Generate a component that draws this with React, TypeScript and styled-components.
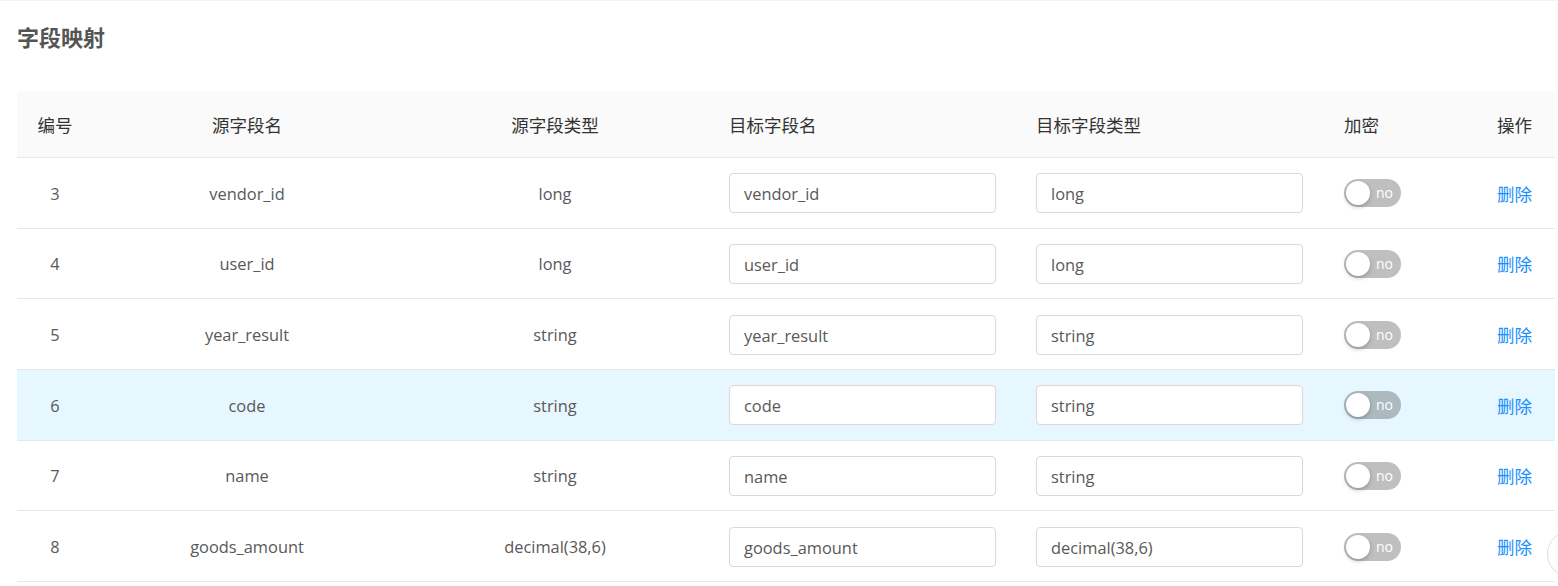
import React from "react";
import styled, { createGlobalStyle } from "styled-components";

const GlobalStyle = createGlobalStyle`
  html, body { margin: 0; padding: 0; background: #fff; }
  body {
    font-family: "Open Sans", "Noto Sans CJK SC", sans-serif;
    color: #555;
    overflow: hidden;
  }
  * { box-sizing: border-box; }
`;

const Page = styled.div`
  position: relative;
  width: 1558px;
  height: 586px;
  border-top: 1px solid #f3f3f3;
  padding: 0 3px 0 17px;
`;

const Title = styled.h2`
  margin: 19px 0 0;
  font-size: 22px;
  line-height: 32px;
  font-weight: 700;
  color: #555;
  font-family: "Noto Sans CJK SC", sans-serif;
`;

const COLS = "76px 308px 308px 307px 308px 153px 78px";

const Table = styled.div`
  margin-top: 39px;
  width: 1538px;
`;

const HeadRow = styled.div`
  display: grid;
  grid-template-columns: ${COLS};
  height: 67px;
  background: #fafafa;
  border-bottom: 1px solid #e8e8e8;
  border-radius: 4px 4px 0 0;
`;

const Row = styled.div<{ $active?: boolean }>`
  display: grid;
  grid-template-columns: ${COLS};
  height: 70.67px;
  background: ${(p) => (p.$active ? "#e6f7ff" : "#fff")};
  border-bottom: 1px solid #e8e8e8;
`;

const Cell = styled.div<{ $align?: "center" | "left" }>`
  display: flex;
  align-items: center;
  justify-content: ${(p) => (p.$align === "left" ? "flex-start" : "center")};
  padding: 1px 20px 0;
  font-size: 16.4px;
  color: #595959;
  white-space: nowrap;
`;

const HeadCell = styled(Cell)`
  color: #333;
  font-family: "Noto Sans CJK SC", sans-serif;
  font-size: 17.5px;
`;

const Input = styled.div`
  width: 267px;
  height: 40px;
  border: 1px solid #d9d9d9;
  border-radius: 4px;
  background: #fff;
  display: flex;
  align-items: center;
  padding: 1px 14px 0;
  font-size: 16.4px;
  color: #595959;
`;

const Switch = styled.div`
  position: relative;
  width: 57px;
  height: 28px;
  border-radius: 14px;
  background: rgba(0, 0, 0, 0.25);
  display: flex;
  align-items: center;
  justify-content: flex-end;
  padding-right: 8px;
  color: #fff;
  font-size: 14px;
  line-height: 1;
`;

const Knob = styled.span`
  position: absolute;
  left: 2px;
  top: 2px;
  width: 24px;
  height: 24px;
  border-radius: 50%;
  background: #fff;
  box-shadow: 0 2px 4px rgba(0, 35, 11, 0.25);
`;

const Link = styled.a`
  color: #1890ff;
  font-size: 17.5px;
  font-family: "Noto Sans CJK SC", sans-serif;
  text-decoration: none;
  cursor: pointer;
`;

const FloatButton = styled.div`
  position: absolute;
  left: 1547px;
  top: 530px;
  width: 46px;
  height: 46px;
  border-radius: 50%;
  border: 1px solid #dcdcdc;
  background: #fff;
`;

const rows = [
  { id: 3, src: "vendor_id", type: "long", tgt: "vendor_id", tgtType: "long" },
  { id: 4, src: "user_id", type: "long", tgt: "user_id", tgtType: "long" },
  { id: 5, src: "year_result", type: "string", tgt: "year_result", tgtType: "string" },
  { id: 6, src: "code", type: "string", tgt: "code", tgtType: "string", active: true },
  { id: 7, src: "name", type: "string", tgt: "name", tgtType: "string" },
  { id: 8, src: "goods_amount", type: "decimal(38,6)", tgt: "goods_amount", tgtType: "decimal(38,6)" },
];

export default function App() {
  return (
    <>
      <GlobalStyle />
      <Page>
        <Title>字段映射</Title>
        <Table>
          <HeadRow>
            <HeadCell>编号</HeadCell>
            <HeadCell>源字段名</HeadCell>
            <HeadCell>源字段类型</HeadCell>
            <HeadCell $align="left">目标字段名</HeadCell>
            <HeadCell $align="left">目标字段类型</HeadCell>
            <HeadCell $align="left">加密</HeadCell>
            <HeadCell $align="left">操作</HeadCell>
          </HeadRow>
          {rows.map((r) => (
            <Row key={r.id} $active={r.active}>
              <Cell>{r.id}</Cell>
              <Cell>{r.src}</Cell>
              <Cell>{r.type}</Cell>
              <Cell $align="left">
                <Input>{r.tgt}</Input>
              </Cell>
              <Cell $align="left">
                <Input>{r.tgtType}</Input>
              </Cell>
              <Cell $align="left">
                <Switch>
                  <Knob />
                  no
                </Switch>
              </Cell>
              <Cell $align="left">
                <Link>删除</Link>
              </Cell>
            </Row>
          ))}
        </Table>
        <FloatButton />
      </Page>
    </>
  );
}
